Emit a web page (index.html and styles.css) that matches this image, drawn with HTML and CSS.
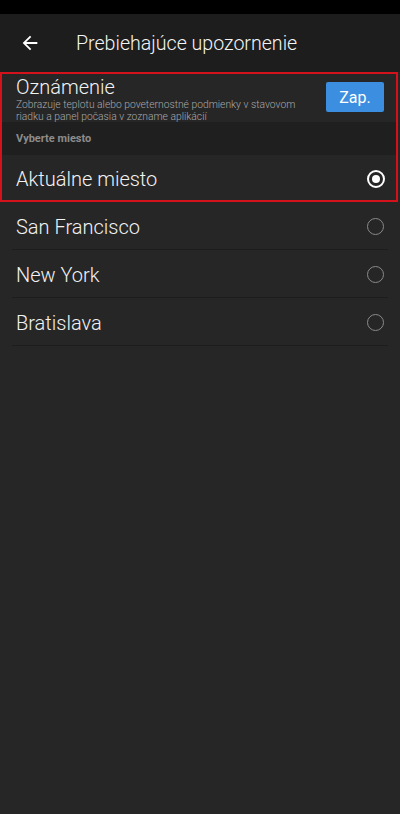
FILE: index.html
```html
<!DOCTYPE html>
<html lang="sk">
<head>
  <meta charset="UTF-8">
  <meta name="viewport" content="width=device-width, initial-scale=1.0">
  <title>Prebiehajúce upozornenie</title>
  <link rel="stylesheet" href="styles.css">
</head>
<body>
  <div class="status-bar"></div>

  <header class="toolbar">
    <svg class="back" width="22" height="22" viewBox="0 0 24 24">
      <path d="M20 11H7.83l5.59-5.59L12 4l-8 8 8 8 1.41-1.41L7.83 13H20v-2z" fill="#fff"/>
    </svg>
    <h1 class="title">Prebiehajúce upozornenie</h1>
  </header>

  <div class="highlight">
    <div class="notify">
      <div class="notify-text">
        <div class="notify-title">Oznámenie</div>
        <div class="notify-sub">Zobrazuje teplotu alebo poveternostné podmienky v stavovom riadku a panel počasia v zozname aplikácií</div>
      </div>
      <button class="btn">Zap.</button>
    </div>
    <div class="section">Vyberte miesto</div>
    <div class="row row-first">
      <span class="label">Aktuálne miesto</span>
      <span class="radio checked"></span>
    </div>
  </div>

  <div class="row">
    <span class="label">San Francisco</span>
    <span class="radio"></span>
  </div>
  <div class="row">
    <span class="label">New York</span>
    <span class="radio"></span>
  </div>
  <div class="row">
    <span class="label">Bratislava</span>
    <span class="radio"></span>
  </div>
</body>
</html>
```

FILE: styles.css
```css
/* Reset */
* {
  margin: 0;
  padding: 0;
  box-sizing: border-box;
}
body {
  font-family: Roboto, "Noto Sans", sans-serif;
  background-color: #262626;
  color: #f2f2f2;
  width: 400px;
  min-height: 814px;
}

/* Status bar */
.status-bar {
  height: 14px;
  background: #000;
}

/* Toolbar */
.toolbar {
  height: 58px;
  background: #1d1d1d;
  display: flex;
  align-items: center;
  padding-left: 19px;
}
.back {
  margin-right: 35px;
}
.title {
  font-size: 19.6px;
  font-weight: 300;
  color: #f4f4f4;
}

/* Red highlight box */
.highlight {
  width: 398px;
  border: 2px solid #d4121c;
}

/* Notification row */
.notify {
  height: 48px;
  display: flex;
  align-items: flex-start;
  justify-content: space-between;
  padding: 2px 12px 0 14px;
}
.notify-title {
  font-size: 20px;
  font-weight: 300;
  line-height: 23px;
}
.notify-sub {
  font-size: 10.3px;
  font-weight: 300;
  line-height: 12px;
  color: #a9a9a9;
  width: 300px;
}
.btn {
  margin-top: 6px;
  width: 58px;
  height: 30px;
  background: #3b8ee0;
  color: #fff;
  border: none;
  border-radius: 2px;
  font-family: inherit;
  font-size: 16px;
}

/* Section header */
.section {
  height: 33px;
  background: #1f1f1f;
  padding-left: 14px;
  display: flex;
  align-items: center;
  font-size: 11px;
  font-weight: bold;
  color: #8c8c8c;
}

/* List rows */
.row {
  height: 48px;
  margin: 0 12px;
  padding: 2px 4px 0;
  display: flex;
  align-items: center;
  justify-content: space-between;
  border-bottom: 1px solid #1d1d1d;
}
.row-first {
  height: 45px;
  margin: 0;
  padding: 2px 11px 0 14px;
  border-bottom: none;
}
.label {
  font-size: 20px;
  font-weight: 300;
}
.radio {
  width: 17px;
  height: 17px;
  border: 1.5px solid #8a8a8a;
  border-radius: 50%;
  display: flex;
  align-items: center;
  justify-content: center;
}
.radio.checked {
  width: 18px;
  height: 18px;
  border: 2px solid #fff;
}
.radio.checked::after {
  content: "";
  width: 8px;
  height: 8px;
  border-radius: 50%;
  background: #fff;
}
```
